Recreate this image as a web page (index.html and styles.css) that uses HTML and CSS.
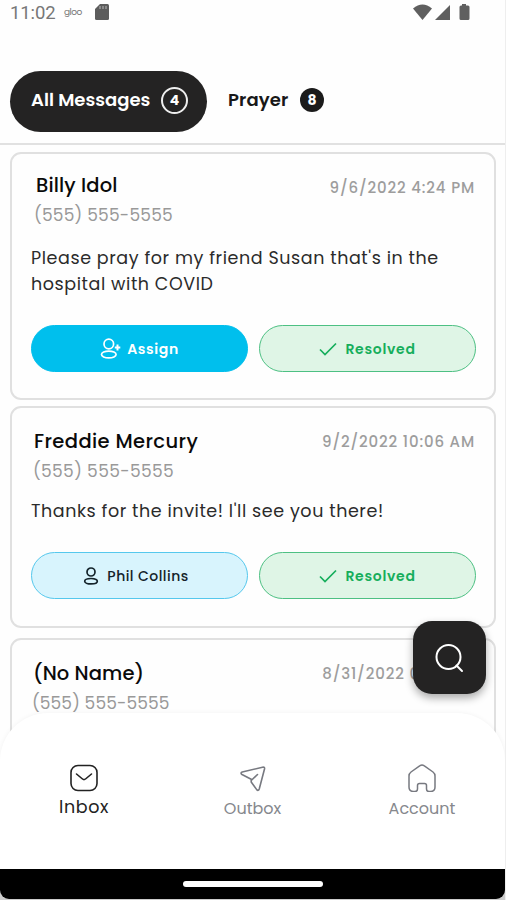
FILE: index.html
```html
<!DOCTYPE html>
<html lang="en">
<head>
<meta charset="utf-8">
<title>Messages</title>
<link rel="stylesheet" href="styles.css">
</head>
<body>
<div class="phone">
  <header class="status">
    <span class="clock">11:02</span>
    <span class="carrier">gloo</span>
    <svg class="sd" width="14" height="16" viewBox="0 0 14 16"><path d="M5 0h7.500q1.500 0 1.500 1.500v13q0 1.500-1.500 1.500h-11Q0 16 0 14.500V5z" fill="#5c5c5c"/><path d="M5 2v3M8 2v3M11 2v3" stroke="#aaa" stroke-width="1.200"/></svg>
    <svg class="signals" width="58" height="17" viewBox="0 0 58 17" fill="#5f5f5f"><path d="M0 4.500Q9.500-3.500 19 4.500L9.500 16z"/><path d="M37 1v15H22z"/><path d="M49 0h4V1.500h2q1.500 0 1.500 1.500v11.500q0 1.500-1.500 1.500h-7q-1.500 0-1.500-1.500V3q0-1.500 1.500-1.500h1z"/></svg>
  </header>
  <nav class="tabs">
    <div class="tab tab-active"><span class="tab-all">All Messages</span><span class="count count-ring">4</span></div>
    <div class="tab"><span class="tab-prayer">Prayer</span><span class="count count-solid">8</span></div>
  </nav>
  <main class="list">
    <article class="card card-billy">
      <div class="head"><h2 class="name">Billy Idol</h2><time class="time">9/6/2022 4:24 PM</time></div>
      <p class="phone-no">(555) 555-5555</p>
      <p class="message">Please pray for my friend Susan that's in the<br>hospital with COVID</p>
      <div class="actions">
        <button class="btn btn-assign"><svg width="21" height="22" viewBox="0 0 21 22" fill="none" stroke="#fff" stroke-width="1.700"><circle cx="8.800" cy="6" r="4.800"/><ellipse cx="8.800" cy="16.500" rx="7.300" ry="3.400"/><path d="M17.500 6.500v6M14.800 9.500h5.500" stroke-width="2"/></svg><span>Assign</span></button>
        <button class="btn btn-resolved"><svg width="18" height="14" viewBox="0 0 18 14" fill="none" stroke="#16ae5c" stroke-width="1.700"><path d="M1 7.500l5 5L17 1.500"/></svg><span>Resolved</span></button>
      </div>
    </article>
    <article class="card card-freddie">
      <div class="head"><h2 class="name">Freddie Mercury</h2><time class="time">9/2/2022 10:06 AM</time></div>
      <p class="phone-no">(555) 555-5555</p>
      <p class="message">Thanks for the invite! I'll see you there!</p>
      <div class="actions">
        <button class="btn btn-person"><svg width="16" height="19" viewBox="0 0 16 19" fill="none" stroke="#14232a" stroke-width="1.700"><circle cx="8" cy="5" r="4"/><ellipse cx="8" cy="14.200" rx="6.300" ry="2.700"/></svg><span>Phil Collins</span></button>
        <button class="btn btn-resolved"><svg width="18" height="14" viewBox="0 0 18 14" fill="none" stroke="#16ae5c" stroke-width="1.700"><path d="M1 7.500l5 5L17 1.500"/></svg><span>Resolved</span></button>
      </div>
    </article>
    <article class="card card-noname">
      <div class="head"><h2 class="name">(No Name)</h2><time class="time">8/31/2022 07:11 AM</time></div>
      <p class="phone-no">(555) 555-5555</p>
    </article>
  </main>
  <nav class="bottom">
    <div class="item item-active"><svg width="28" height="28" viewBox="0 0 28 28" fill="none" stroke="#222" stroke-width="1.600"><rect x="1" y="1.500" width="26" height="25" rx="7"/><path d="M6.500 10l6 5q1.500 1.200 3 0l6-5" stroke-linecap="round"/></svg><span>Inbox</span></div>
    <div class="item item-outbox"><svg width="28" height="28" viewBox="0 0 28 28" fill="none" stroke="#777980" stroke-width="1.600" stroke-linejoin="round" stroke-linecap="round"><path d="M3.200 8L23.500 3.200q2.500-.4 2 1.800L20.300 24.800q-.9 2.700-2.600.8L12.200 18v-2.800L3 10.500q-2-1.500.2-2.500zM12.200 16.500l6.300-6"/></svg><span>Outbox</span></div>
    <div class="item item-account"><svg width="28" height="28" viewBox="0 0 28 28" fill="none" stroke="#777980" stroke-width="1.500" stroke-linejoin="round"><path d="M3 8L12 1.700q2-1.500 4 0L25 8q2 1.500 2 4V23q0 4.500-4.500 4.500h-1.500q-2.500 0-2.500-2.500V21.500q0-2-2-2h-5q-2 0-2 2V25q0 2.500-2.500 2.500H5.500Q1 27.500 1 23V12q0-2.500 2-4z"/></svg><span>Account</span></div>
  </nav>
  <footer class="home"><div class="system"><i class="grip"></i></div></footer>
  <button class="search"><svg width="29" height="30" viewBox="0 0 29 30" fill="none" stroke="#fff" stroke-width="2"><circle cx="13.500" cy="14" r="12"/><path d="M21.500 22.500l5.500 5.500" stroke-linecap="round"/></svg></button>
  <i class="scroll"></i>
</div>
</body>
</html>
```
FILE: styles.css
```css
* { box-sizing: border-box; }
body { margin: 0; background: #fff; font-family: Poppins, Inter, "Liberation Sans", sans-serif; }
h2, p { margin: 0; }
svg { display: block; flex: none; }
span, time, h2, p { white-space: nowrap; }
button { margin: 0; padding: 0; font-family: inherit; }
.phone { position: relative; width: 506px; height: 900px; overflow: hidden; display: flex; flex-direction: column; background: #fefefe; border-right: 1px solid #eee; }
.status { height: 26px; display: flex; align-items: center; padding: 0 34px 2px 10px; flex: none; color: #777; }
.clock { font: 400 18.5px/24px Roboto, sans-serif; width: 54px; letter-spacing: -.1px; padding-top: 2px; }
.carrier { font-size: 9px; width: 31px; letter-spacing: -.5px; }
.signals { margin-left: auto; }
.tabs { height: 119px; flex: none; display: flex; align-items: flex-start; padding: 45px 10px 0; border-bottom: 2px solid #e1e1e1; }
.tab { height: 61px; display: flex; align-items: center; padding: 0 21px 3px; font-weight: 600; font-size: 18px; line-height: 26px; color: #181818; }
.tab-active { width: 197px; background: #242323; color: #fff; border-radius: 31px; padding-right: 19px; }
.tab-all { width: 130px; letter-spacing: 0; }
.tab-prayer { width: 72px; letter-spacing: .1px; }
.count { display: flex; flex: none; align-items: center; justify-content: center; border-radius: 50%; font-size: 14px; font-weight: 700; }
.count-ring { width: 27px; height: 27px; border: 2px solid #eee; }
.count-solid { width: 24px; height: 24px; background: #1b1b1b; color: #fff; }
.list { flex: 1; min-height: 0; overflow: hidden; padding: 7px 9px 0 10px; }
.card { border: 2px solid #e0e0e0; border-radius: 11px; padding: 18px 19px 0; }
.card-billy { height: 248px; }
.card-freddie { height: 222px; margin-top: 6px; padding-top: 20px; }
.card-noname { height: 240px; margin-top: 10px; padding-top: 20px; }
.head { display: flex; justify-content: space-between; height: 28px; line-height: 28px; padding-left: 3px; }
.name { font-size: 19.5px; font-weight: 500; color: #0a0a0a; letter-spacing: .4px; }
.time { font-size: 15px; font-weight: 500; color: #9d9d9d; letter-spacing: .85px; }
.phone-no { height: 26px; margin-top: 2px; padding-left: 2px; font-size: 17px; line-height: 26px; color: #999; letter-spacing: .35px; }
.message { margin-top: 17px; font-size: 17.5px; line-height: 26px; color: #2b2b2b; letter-spacing: .58px; }
.card-billy .head { padding-left: 5px; }
.card-billy .name { letter-spacing: .15px; }
.card-billy .time { padding-top: 2px; }
.card-billy .phone-no { padding-left: 3px; letter-spacing: .2px; }
.card-freddie .message { margin-top: 14px; }
.card-noname .head { padding-left: 2px; }
.card-noname .name { letter-spacing: .1px; }
.card-noname .time { margin-right: -1px; }
.card-noname .phone-no { padding-left: 1px; letter-spacing: .1px; }
.actions { display: grid; grid-template-columns: 217px 217px; gap: 11px; margin-top: 28px; }
.btn { height: 47px; border-radius: 24px; display: flex; align-items: center; justify-content: center; font-size: 14px; font-weight: 600; border: 1px solid; padding-top: 1px; }
.btn-assign { background: #00bfed; border-color: #00bfed; color: #fff; gap: 6px; letter-spacing: .6px; }
.btn-resolved { background: #dff5e6; border-color: #4dc083; color: #16ae5c; gap: 8px; letter-spacing: .7px; }
.btn-person { background: #d8f4fd; border-color: #55c8ed; color: #14232a; gap: 8px; font-weight: 500; letter-spacing: .45px; padding-right: 7px; }
.bottom { position: relative; height: 156px; margin-top: -56px; flex: none; display: grid; grid-template-columns: 168px 169px 168px; padding-top: 51px; border-radius: 48px 48px 0 0; background: #fff; box-shadow: 0 0 5px #0000000d; }
.item { display: flex; flex-direction: column; align-items: center; color: #86888d; font-size: 16px; line-height: 26px; gap: 4px; }
.item-account { padding-left: 2px; }
.item-active { color: #222; font-size: 17.5px; gap: 2px; letter-spacing: .6px; }
.home { height: 31px; flex: none; background: #ccc; }
.system { height: 30px; background: #000; border-radius: 0 0 9px 9px; display: flex; justify-content: center; padding-top: 12px; }
.grip { width: 140px; height: 6px; border-radius: 3px; background: #fff; }
.search { position: absolute; left: 413px; top: 621px; width: 73px; height: 73px; border: 0; border-radius: 19px; background: #242323; box-shadow: 0 4px 8px #0005; display: flex; align-items: center; justify-content: center; }
.scroll { position: absolute; right: -1px; top: 101px; width: 1px; height: 332px; background: #ccc; }
```
